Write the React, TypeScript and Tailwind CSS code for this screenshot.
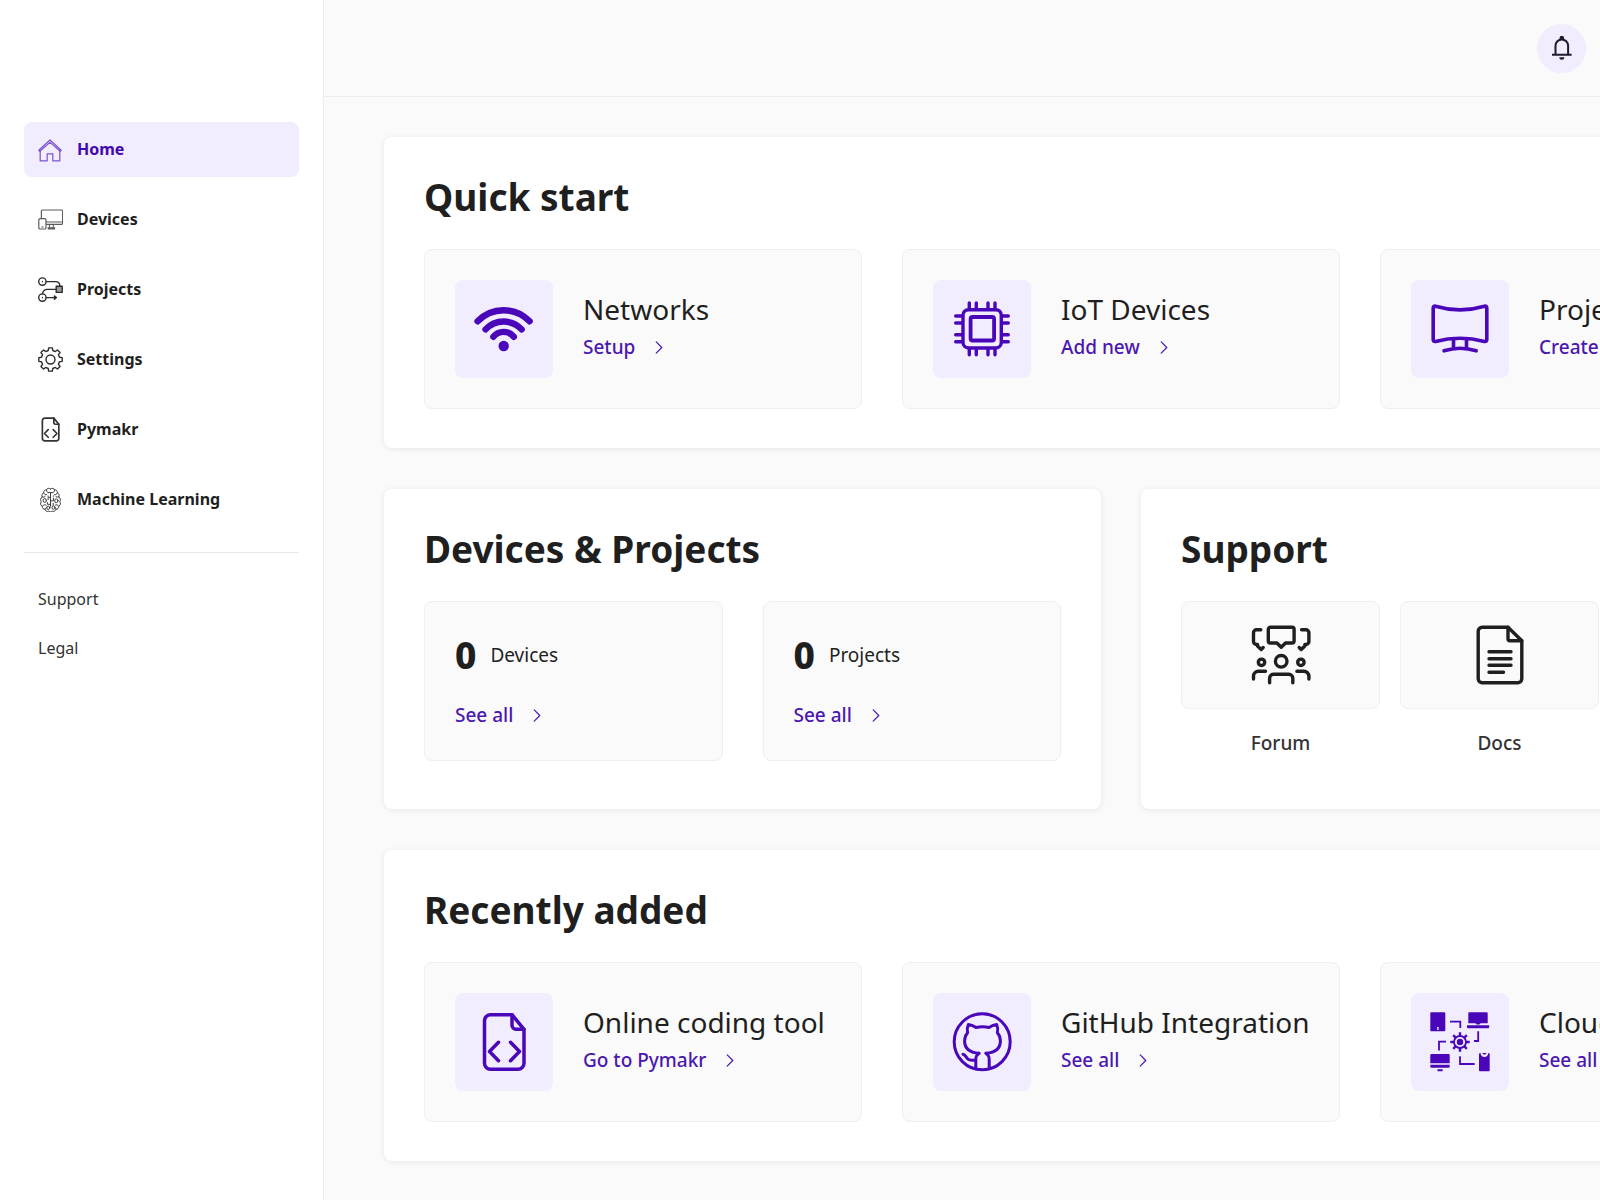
import type { ReactNode } from "react";

type IconProps = { className?: string };

/** Outline of a cog with eight rounded teeth. */
function gearPath(cx: number, cy: number, outer: number, inner: number) {
  const points: string[] = [];
  for (let i = 0; i < 8; i++) {
    const steps: [number, number][] = [
      [-14, inner],
      [-9, outer],
      [9, outer],
      [14, inner],
    ];
    for (const [offset, r] of steps) {
      const a = ((i * 45 + offset) * Math.PI) / 180;
      points.push(`${(cx + r * Math.cos(a)).toFixed(2)} ${(cy + r * Math.sin(a)).toFixed(2)}`);
    }
  }
  return `M${points.join("L")}Z`;
}

function NavSvg({ children, className = "" }: { children: ReactNode; className?: string }) {
  return (
    <svg
      viewBox="0 0 25 25"
      className={`size-[25px] shrink-0 ${className}`}
      fill="none"
      stroke="currentColor"
      strokeWidth="1.2"
      strokeLinecap="round"
      strokeLinejoin="round"
      aria-hidden="true"
    >
      {children}
    </svg>
  );
}

function HomeIcon() {
  return (
    <NavSvg className="text-[#7a54cb]">
      <path d="M.8 13.200 12 3l11.200 10.200-1 1.100L12 5.400 1.800 14.300Z" />
      <path d="M2.200 14v9.800h7v-7h5.600v7h7V14" />
    </NavSvg>
  );
}

function DevicesIcon() {
  return (
    <NavSvg className="text-[#5c5c5c]">
      <path d="M3.400 11V4.200c0-.7.5-1.200 1.200-1.200h18.800c.7 0 1.200.5 1.200 1.200v12c0 .7-.5 1.200-1.200 1.200H8.500" />
      <path d="M8.500 15h16" />
      <rect x=".8" y="11.600" width="7.200" height="10.400" rx="1.300" />
      <path d="M3.700 20h1.400M11.500 17.500v3.200M15.300 17.500v3.200M10.200 21.800h6.400v-1h-6.400Z" />
    </NavSvg>
  );
}

function ProjectsIcon() {
  return (
    <NavSvg className="text-[#2c2c2c]">
      <g strokeWidth="1.4">
        <circle cx="4.400" cy="4.600" r="3.700" />
        <circle cx="4.400" cy="20.600" r="3.700" />
        <path d="M8.200 4.600h9.600a4 4 0 0 1 4 4.200M18 12.400H9.400a4.500 4.500 0 0 0-4.800 4.300M8.200 20.600H18M16.500 18.900l1.900 1.700-1.900 1.700Z" />
        <rect x="18.200" y="9.200" width="6" height="6.200" fill="#9a9a9a" />
      </g>
      <path d="M4.400 4.400v.4M4.400 20.400v.4" />
    </NavSvg>
  );
}

function SettingsIcon() {
  return (
    <NavSvg className="text-[#2c2c2c]">
      <path d={gearPath(12.5, 12.5, 11.8, 9.3)} strokeWidth="1.4" />
      <circle cx="12.500" cy="12.500" r="4.500" strokeWidth="1.4" />
    </NavSvg>
  );
}

function BrainIcon() {
  return (
    <NavSvg className="text-[#333333]">
      <g strokeWidth="1" transform="translate(1.4 .8) scale(.89 1)">
        <path d="M12.500 1.200C10.800-.1 8.600.4 8 2 6 1.800 4.600 3.300 4.900 5 3 5.600 2.300 7.600 3.200 9.200 1.300 10.200.9 12.400 2 13.800c-1.200 1.700-.6 3.900 1.200 4.600-.1 2 1.500 3.400 3.200 3.100.7 1.900 2.700 2.700 4.300 1.700.6.600 1.200.8 1.800.8.600 0 1.200-.2 1.800-.8 1.600 1 3.600.2 4.300-1.700 1.700.3 3.300-1.100 3.200-3.100 1.800-.7 2.400-2.900 1.200-4.600 1.100-1.400.7-3.600-1.200-4.600.9-1.600.2-3.600-1.700-4.200.3-1.700-1.100-3.200-3.100-3C16.400.4 14.200-.1 12.500 1.200Z" />
        <path d="M12.500 5v13.500M10.300 4.800h4.400M8 2.200c0 1.600.6 2.400 2 2.600M17 2.200c0 1.600-.6 2.400-2 2.600M4.900 5.200c.6 1.400 1.700 1.900 3 1.600M20.100 5.200c-.6 1.400-1.700 1.900-3 1.600M3.300 9.300c1.500.4 2.700 0 3.500-1M21.700 9.300c-1.500.4-2.700 0-3.500-1" />
        <path d="M12.500 9.500H9.800v2.400M12.500 13h3.300v-2.600M12.500 16.500H9v-1.800M15.500 15.500v2.200" />
        <circle cx="6" cy="12.700" r="1.900" />
        <circle cx="19" cy="13" r="1.900" />
        <circle cx="10" cy="20" r="1.700" />
        <circle cx="15.800" cy="19.800" r="1.700" />
        <path d="M3.400 18.300c1.300-1.600 3-1.800 4.300-.8M21.600 18.300c-1.300-1.600-2.600-1.700-3.700-1M6.500 21.400c.1-1 .6-1.500 1.700-1.600M18.500 21.400c-.1-1-.3-1.300-1-1.600M9.800 8.200v.4M15.700 8v.5" />
      </g>
    </NavSvg>
  );
}

function CodeFileIcon({ className = "" }: IconProps) {
  return (
    <svg viewBox="0 0 60 60" className={`shrink-0 ${className}`} fill="none" stroke="currentColor" strokeLinecap="round" strokeLinejoin="round" aria-hidden="true">
      <path d="M38 2.700H16.500a6 6 0 0 0-6 6v42.600a6 6 0 0 0 6 6H44a6 6 0 0 0 6-6V17.300Z" />
      <path d="M38 2.700v10.600a4 4 0 0 0 4 4h8" />
      <path d="m24.500 30.300-9 9.200 9 9.200M36.500 30.300l9 9.200-9 9.200" />
    </svg>
  );
}

function LargeSvg({ children, strokeWidth = 3.4 }: { children: ReactNode; strokeWidth?: number }) {
  return (
    <svg
      viewBox="0 0 60 60"
      className="size-15 shrink-0"
      fill="none"
      stroke="currentColor"
      strokeWidth={strokeWidth}
      strokeLinecap="round"
      strokeLinejoin="round"
      aria-hidden="true"
    >
      {children}
    </svg>
  );
}

function WifiIcon() {
  return (
    <LargeSvg strokeWidth={6.4}>
      <path d="M3.600 22.300a36 36 0 0 1 52 0M11.600 30.400a24.500 24.500 0 0 1 36 0M19.400 37.800a13 13 0 0 1 20.400 0" />
      <circle cx="29.700" cy="47" r="5.200" fill="currentColor" stroke="none" />
    </LargeSvg>
  );
}

function ChipIcon() {
  return (
    <LargeSvg>
      <rect x="11" y="10.700" width="38.300" height="38.300" rx="5.500" />
      <rect x="18.600" y="18" width="23.500" height="23.500" rx="2" strokeWidth="3.800" />
      <path d="M17.300 10V4M24.300 10V4M36 10V4M43 10V4M17.300 49.700v6M24.300 49.700v6M36 49.700v6M43 49.700v6M10.300 17H3.700M10.300 24H3.700M10.300 35.700H3.700M10.300 42.700H3.700M50 17h6.300M50 24h6.300M50 35.700h6.300M50 42.700h6.300" />
    </LargeSvg>
  );
}

function MonitorIcon() {
  return (
    <LargeSvg strokeWidth={3.6}>
      <path d="M5.500 7.200Q30 14.500 54.500 7.200q2.300-.4 2.300 1.800v31.500q0 2.300-2.300 1.900Q30 36 5.500 42.400q-2.300.4-2.300-1.900V9q0-2.200 2.300-1.800Z" />
      <path d="M23.500 39.500v9M36.500 39.500v9M14 51.800q16-5.200 32.200 0" />
    </LargeSvg>
  );
}

function GithubIcon() {
  return (
    <LargeSvg strokeWidth={3}>
      <circle cx="30.200" cy="29.800" r="28" />
      <path d="M27 41.300C18 40.500 12.600 36.300 12.600 29c0-3.500 1-6 3-8.300-.7-3-.4-5.700.8-8.300 2.700.2 5 1.300 7.600 3.100 4.300-.9 8.700-.9 13 0 2.600-1.800 4.900-2.900 7.600-3.100 1.200 2.600 1.500 5.300.8 8.300 2 2.300 3 4.800 3 8.300 0 7.300-5.400 11.500-14.400 12.300" />
      <path d="M27 41.300c-2.300 1.500-3.200 3.300-3.200 6.200v9M34 41.300c2.300 1.500 3.200 3.300 3.200 6.200v9M11 42.300c2 .6 2.600 1.700 3.700 3.400 1.600 2.500 5 3 9 2.300" />
    </LargeSvg>
  );
}

function CloudDevicesIcon() {
  return (
    <svg viewBox="0 0 60 60" className="size-15 shrink-0" fill="currentColor" aria-hidden="true">
      <path fillRule="evenodd" d="M1.300.300h13a1 1 0 0 1 1 1v17a1 1 0 0 1-1 1h-13a1 1 0 0 1-1-1v-17a1 1 0 0 1 1-1ZM7.200 15v3h1.400v-3Z" />
      <path d="M39.300.300h17.400a1 1 0 0 1 1 1v10H50.500l-1 1.200h-3l-1-1.200h-7.200v-10a1 1 0 0 1 1-1ZM37 13.300h22.200v2a1 1 0 0 1-1 1H38a1 1 0 0 1-1-1Z" />
      <path d="M.300 43a1 1 0 0 1 1-1h17.400a1 1 0 0 1 1 1v8.300H.300ZM.300 52.700h19.400v2a1 1 0 0 1-1 1H1.300a1 1 0 0 1-1-1ZM7.500 57.300h5.200v2H7.500Z" />
      <path d="M49 42.300q0-1.300 1.500-1.300.6 4 3.900 4t3.900-4q1.400 0 1.400 1.300v16a1 1 0 0 1-1 1H50a1 1 0 0 1-1-1ZM52.300 41h4.200q-.4 1.600-2.100 1.600T52.300 41Z" />
      <g fill="none" stroke="currentColor" strokeWidth="1.800">
        <path d="M20 9.700h10.300V16M48.200 19.300V29H44M9 38.500v-8.800h7M30 44.300V52h14.700" />
        <circle cx="30" cy="30" r="6" />
        <path strokeWidth="2.400" d="M30 20.300V24M30 36v3.700M20.300 30H24M36 30h3.700M23.200 23.200l2.600 2.600M34.200 34.200l2.600 2.600M23.200 36.800l2.600-2.600M34.200 25.800l2.600-2.600" />
      </g>
      <circle cx="30" cy="30" r="3.200" />
    </svg>
  );
}

function ForumIcon() {
  return (
    <LargeSvg>
      <path d="M19.300 2.300h21.800a2 2 0 0 1 2 2V16a2 2 0 0 1-2 2h-6.600l-4.300 4.300L25.900 18h-6.600a2 2 0 0 1-2-2V4.300a2 2 0 0 1 2-2Z" />
      <path d="M9.800 4.700H5.500a3 3 0 0 0-3 3v8.800a3 3 0 0 0 3 3h1v1.500l3.700 3.500 2-2" />
      <path d="M50.600 4.700h4.300a3 3 0 0 1 3 3v8.800a3 3 0 0 1-3 3h-1V21l-3.700 3.500-2-2" />
      <circle cx="30.200" cy="36.300" r="5.800" />
      <circle cx="10.500" cy="37.300" r="3.200" />
      <circle cx="49.900" cy="37.300" r="3.200" />
      <path d="M18.600 57.700v-4.400a4 4 0 0 1 4-4h15.200a4 4 0 0 1 4 4v4.400M2.500 54v-2.700a5 5 0 0 1 5-5h7M57.900 54v-2.700a5 5 0 0 0-5-5h-7" />
    </LargeSvg>
  );
}

function DocsIcon() {
  return (
    <LargeSvg>
      <path d="M38 2.300H12.200a4 4 0 0 0-4 4v47.400a4 4 0 0 0 4 4h35.600a4 4 0 0 0 4-4v-38Z" />
      <path d="M38 2.300v11.400a2 2 0 0 0 2 2h11.800M19 26.700h22M19 33.700h22M19 40.300h22M19 47.300h14.500" />
    </LargeSvg>
  );
}

function BellIcon() {
  return (
    <svg viewBox="0 0 24 24" className="size-6" fill="none" stroke="currentColor" strokeWidth="2" aria-hidden="true">
      <path d="M2 18.800h19.600M5.500 19V9.700a6.300 6.300 0 0 1 12.600 0V19" />
      <path d="M9.600 3.800V2a2.200 2.200 0 0 1 4.400 0v1.800ZM9.300 21.300h5a2.500 2.500 0 0 1-5 0Z" fill="currentColor" stroke="none" />
    </svg>
  );
}

function Chevron() {
  return (
    <svg viewBox="0 0 8 14" className="h-[13px] w-2" fill="none" stroke="currentColor" strokeWidth="1.300" strokeLinecap="round" strokeLinejoin="round" aria-hidden="true">
      <path d="m1 1 6 6-6 6" />
    </svg>
  );
}

function ArrowLink({ children }: { children: ReactNode }) {
  return (
    <a href="#" className="flex items-center gap-5 text-[19px] leading-[26px] font-medium whitespace-nowrap text-[#4b17b0]">
      {children}
      <Chevron />
    </a>
  );
}

function Panel({ title, children, className = "" }: { title: string; children: ReactNode; className?: string }) {
  return (
    <section className={`rounded-lg bg-white px-10 pt-10 shadow-[0_1px_6px_rgba(0,0,0,0.08)] ${className}`}>
      <h2 className="mb-8 text-[37px] leading-10 font-bold">{title}</h2>
      {children}
    </section>
  );
}

const cardClass = "rounded-lg border border-[#efefef] bg-[#fafafa]";

function ActionCard({ icon, title, link }: { icon: ReactNode; title: string; link: string }) {
  return (
    <article className={`${cardClass} flex items-center gap-[30px] p-[30px]`}>
      <div className="flex size-[98px] shrink-0 items-center justify-center rounded-lg bg-[#f1ecfe] text-[#4907b9]">{icon}</div>
      <div className="pb-1.5">
        <h3 className="mb-2 text-[28px] leading-[34px] whitespace-nowrap">{title}</h3>
        <ArrowLink>{link}</ArrowLink>
      </div>
    </article>
  );
}

function CountCard({ count, label }: { count: number; label: string }) {
  return (
    <article className={`${cardClass} h-40 px-[30px] pt-[34px]`}>
      <p className="mb-7 flex items-center gap-3.5 text-[19px] leading-[38px]">
        <span className="text-[37px] font-extrabold">{count}</span>
        {label}
      </p>
      <ArrowLink>See all</ArrowLink>
    </article>
  );
}

function SupportCard({ icon, label }: { icon: ReactNode; label: string }) {
  return (
    <a href="#" className="block text-center text-[19px] leading-[26px] font-medium text-[#333333]">
      <span className={`${cardClass} mb-[21px] flex h-[108px] items-center justify-center text-[#1f1f1f]`}>{icon}</span>
      {label}
    </a>
  );
}

const navItems = [
  { label: "Home", icon: <HomeIcon />, active: true },
  { label: "Devices", icon: <DevicesIcon /> },
  { label: "Projects", icon: <ProjectsIcon /> },
  { label: "Settings", icon: <SettingsIcon /> },
  { label: "Pymakr", icon: <CodeFileIcon className="size-[25px] stroke-[4] text-[#333333]" /> },
  { label: "Machine Learning", icon: <BrainIcon /> },
];

function Sidebar() {
  return (
    <aside className="w-81 shrink-0 border-r border-[#eeeeee] bg-white px-6 pt-[122px]">
      <nav aria-label="Main">
        <ul className="flex flex-col gap-[15px]">
          {navItems.map((item) => (
            <li key={item.label}>
              <a
                href="#"
                aria-current={item.active ? "page" : undefined}
                className={`flex h-[55px] items-center gap-3.5 rounded-lg px-3.5 text-[16px] font-bold ${
                  item.active ? "bg-[#f1ecfe] text-[#4108b0]" : "text-[#1f1f1f]"
                }`}
              >
                {item.icon}
                <span className="pb-0.5">{item.label}</span>
              </a>
            </li>
          ))}
        </ul>
      </nav>
      <ul className="mt-[25px] flex flex-col gap-[25px] border-t border-[#e9e9e9] px-3.5 pt-[34px] text-[16px] leading-6 text-[#333333]">
        <li>
          <a href="#">Support</a>
        </li>
        <li>
          <a href="#">Legal</a>
        </li>
      </ul>
    </aside>
  );
}

export default function App() {
  return (
    <div className="flex min-h-screen overflow-hidden bg-[#fafafa] font-['Noto_Sans',sans-serif] text-[#1f1f1f]">
      <Sidebar />
      <div className="min-w-0 flex-1">
        <header className="flex h-[97px] items-center justify-end border-b border-[#eeeeee] px-3.5">
          <button type="button" aria-label="Notifications" className="flex size-[49px] items-center justify-center rounded-full bg-[#f1ecfe] text-[#1f1b2c]">
            <BellIcon />
          </button>
        </header>
        <main className="flex min-w-[1594px] flex-col gap-[41px] px-15 py-10">
          <Panel title="Quick start" className="pb-[39px]">
            <div className="grid grid-cols-3 gap-10">
              <ActionCard icon={<WifiIcon />} title="Networks" link="Setup" />
              <ActionCard icon={<ChipIcon />} title="IoT Devices" link="Add new" />
              <ActionCard icon={<MonitorIcon />} title="Projects" link="Create new" />
            </div>
          </Panel>
          <div className="grid grid-cols-2 gap-10">
            <Panel title="Devices & Projects" className="pb-12">
              <div className="grid grid-cols-2 gap-10">
                <CountCard count={0} label="Devices" />
                <CountCard count={0} label="Projects" />
              </div>
            </Panel>
            <Panel title="Support" className="pb-12">
              <div className="grid grid-cols-3 gap-5">
                <SupportCard icon={<ForumIcon />} label="Forum" />
                <SupportCard icon={<DocsIcon />} label="Docs" />
              </div>
            </Panel>
          </div>
          <Panel title="Recently added" className="pb-[39px]">
            <div className="grid grid-cols-3 gap-10">
              <ActionCard icon={<CodeFileIcon className="size-15 stroke-[3.5]" />} title="Online coding tool" link="Go to Pymakr" />
              <ActionCard icon={<GithubIcon />} title="GitHub Integration" link="See all" />
              <ActionCard icon={<CloudDevicesIcon />} title="Cloud Integration" link="See all" />
            </div>
          </Panel>
        </main>
      </div>
    </div>
  );
}
